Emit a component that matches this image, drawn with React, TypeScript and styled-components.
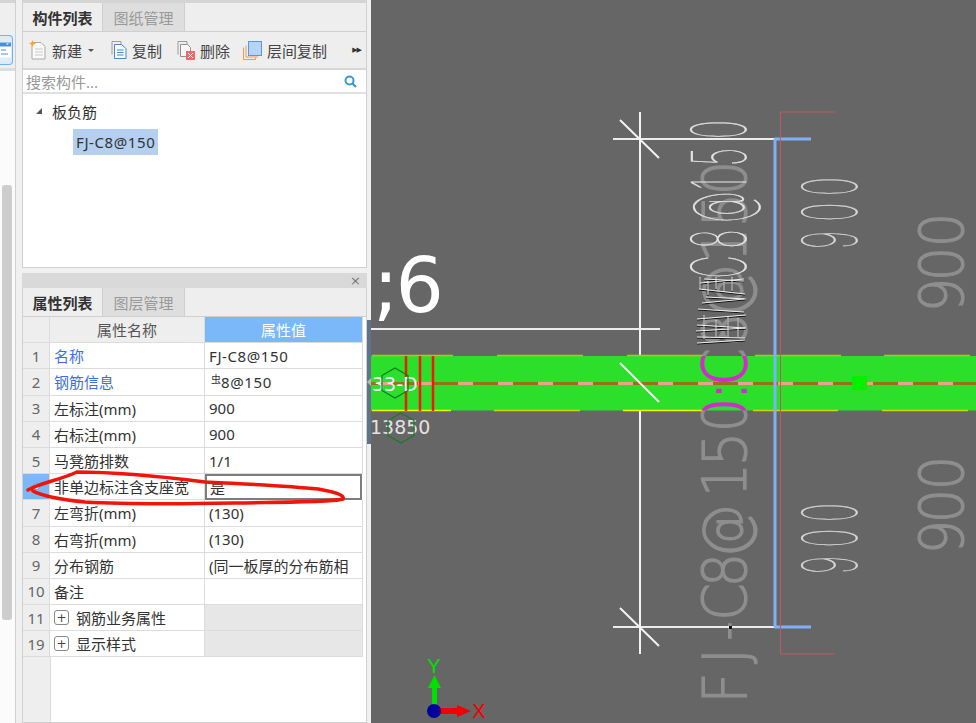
import { Fragment } from "react";
import styled, { createGlobalStyle } from "styled-components";

const GlobalStyle = createGlobalStyle`
    html, body {
        margin: 0;
        padding: 0;
        background: #f0f0f0;
    }
    body {
        font-family: "Noto Sans", "Noto Sans CJK SC", sans-serif;
        font-size: 15px;
        color: #333;
    }
`;

const Shell = styled.div`
    display: flex;
    width: 976px;
    height: 723px;
    overflow: hidden;
    background: #f0f0f0;
`;

const Rail = styled.div`
    flex-shrink: 0;
    width: 15px;
    display: flex;
    flex-direction: column;
    border-right: 1px solid #cfcfcf;
    background: #fbfbfb;
`;

const RailTools = styled.div`
    height: 71px;
    padding-top: 32px;
    box-sizing: border-box;
    background: #efefef;
    border-top: 3px solid #d4d4d4;
    border-bottom: 3px solid #dddddd;
`;

const RailButton = styled.div`
    width: 13px;
    height: 30px;
    box-sizing: border-box;
    border: 1px solid #6cb2f5;
    border-left: 0;
    border-radius: 0 4px 4px 0;
    background: #dcecfb;
    display: flex;
    align-items: center;
`;

const RailScrollTrack = styled.div`
    flex: 1;
    padding: 114px 3px 103px 2px;
    display: flex;
`;

const RailScrollThumb = styled.div`
    flex: 1;
    background: #cdcdcd;
    border-radius: 3px;
`;

const Panels = styled.div`
    flex-shrink: 0;
    width: 345px;
    margin-left: 6px;
    display: flex;
    flex-direction: column;
    position: relative;
`;

const TopStrip = styled.div`
    height: 3px;
    background: #d4d4d4;
`;

const Panel = styled.div<{ $grow?: boolean }>`
    display: flex;
    flex-direction: column;
    border: 1px solid #d0d0d0;
    border-top: 0;
    box-sizing: border-box;
    ${(p) => (p.$grow ? "flex: 1; min-height: 0;" : "height: 265px;")}
`;

const TitleBar = styled.div`
    margin-top: 5px;
    height: 15px;
    flex-shrink: 0;
    background: #d9d9d9;
    display: flex;
    align-items: center;
    justify-content: flex-end;
    padding-right: 6px;
    color: #777;
    font-size: 13px;
    font-family: "DejaVu Sans", sans-serif;
`;

const TabRow = styled.div`
    height: 29px;
    flex-shrink: 0;
    display: flex;
    background: #eeeeee;
    border-bottom: 1px solid #cfcfcf;
    box-sizing: border-box;
`;

const Tab = styled.div<{ $active?: boolean }>`
    width: ${(p) => (p.$active ? "80px" : "82px")};
    display: flex;
    align-items: center;
    justify-content: center;
    font-weight: ${(p) => (p.$active ? 700 : 400)};
    color: ${(p) => (p.$active ? "#333" : "#999")};
    background: ${(p) => (p.$active ? "#eeeeee" : "#dedede")};
    border-right: 1px solid #cfcfcf;
    box-sizing: border-box;
`;

const Toolbar = styled.div`
    height: 38px;
    flex-shrink: 0;
    display: flex;
    align-items: center;
    padding-left: 6px;
    background: #eeeeee;
    border-bottom: 2px solid #d6d6d6;
    box-sizing: border-box;
`;

const ToolButton = styled.div<{ $gap: number }>`
    display: flex;
    align-items: center;
    gap: 5px;
    margin-right: ${(p) => p.$gap}px;
    white-space: nowrap;
    color: #444;
`;

const Caret = styled.span`
    width: 0;
    height: 0;
    margin-left: 1px;
    border-left: 3px solid transparent;
    border-right: 3px solid transparent;
    border-top: 3px solid #555;
`;

const More = styled.span`
    margin-left: auto;
    margin-right: 5px;
    font-size: 7px;
    letter-spacing: -1px;
    color: #333;
    font-family: "DejaVu Sans", sans-serif;
`;

const SearchBar = styled.div`
    height: 24px;
    flex-shrink: 0;
    display: flex;
    align-items: center;
    justify-content: space-between;
    padding: 0 9px 0 3px;
    color: #999;
    background: #fff;
    border-bottom: 2px solid #e0e0e0;
    box-sizing: border-box;
`;

const Tree = styled.div`
    flex: 1;
    background: #fff;
    padding: 6px 0 0 13px;
`;

const TreeRoot = styled.div`
    display: flex;
    align-items: center;
    gap: 10px;
    height: 22px;
    color: #333;
`;

const TreeArrow = styled.span`
    width: 0;
    height: 0;
    border-left: 6px solid transparent;
    border-bottom: 6px solid #555;
`;

const TreeItem = styled.div`
    display: inline-block;
    margin: 7px 0 0 37px;
    padding: 0 3px;
    height: 26px;
    line-height: 26px;
    background: #b4cff0;
    color: #333;
    letter-spacing: 0.6px;
`;

const TableWrap = styled.div`
    flex: 1;
    display: flex;
    flex-direction: column;
    background: #fff;
    padding-right: 3px;
    min-height: 0;
`;

const TableRow = styled.div`
    display: grid;
    grid-template-columns: 27px 155px 1fr;
    height: 26.2px;
    flex-shrink: 0;
`;

const Cell = styled.div<{ $bg?: string; $color?: string; $center?: boolean }>`
    display: flex;
    align-items: center;
    justify-content: ${(p) => (p.$center ? "center" : "flex-start")};
    padding: 0 ${(p) => (p.$center ? 0 : 4)}px;
    box-sizing: border-box;
    white-space: nowrap;
    overflow: hidden;
    background: ${(p) => p.$bg ?? "#fff"};
    color: ${(p) => p.$color ?? "#333"};
    border-right: 1px solid #dcdcdc;
    border-bottom: 1px solid #dcdcdc;
`;

const NumberCell = styled(Cell)`
    background: ${(p) => p.$bg ?? "#eeeeee"};
    color: #666;
    padding: 0;
    justify-content: center;
`;

const ActiveValue = styled(Cell)`
    border: 2px solid #7d7d7d;
    padding-left: 3px;
    margin-right: 1px;
`;

const RebarText = styled.span`
    letter-spacing: 0.6px;
`;

const SelectedDot = styled.span`
    width: 5px;
    height: 5px;
    border-radius: 50%;
    background: #fff;
    border: 1px solid #5d95d8;
`;

const GroupName = styled.span`
    margin-left: 7px;
`;

const PlusBox = styled.span`
    width: 15px;
    height: 15px;
    flex-shrink: 0;
    box-sizing: border-box;
    border: 1px solid #888;
    border-radius: 3px;
    display: flex;
    align-items: center;
    justify-content: center;
    font-size: 12px;
    line-height: 1;
    color: #444;
    font-family: "DejaVu Sans", sans-serif;
`;

const SteelMark = styled.span`
    font-size: 10px;
    position: relative;
    top: -3px;
    margin-left: 2px;
`;

const TableFiller = styled.div`
    flex: 1;
    width: 27px;
    background: #eeeeee;
    border-right: 1px solid #dcdcdc;
`;

const Annotation = styled.svg`
    position: absolute;
    left: -22px;
    top: 0;
    pointer-events: none;
`;

const Gutter = styled.div`
    flex-shrink: 0;
    width: 4px;
    padding-top: 320px;
`;

const SplitHandle = styled.div`
    height: 124px;
    background: #5f7488;
    display: flex;
    align-items: center;
    justify-content: center;
`;

const SplitArrow = styled.span`
    width: 0;
    height: 0;
    border-top: 4px solid transparent;
    border-bottom: 4px solid transparent;
    border-right: 4px solid #b9b9b9;
`;

const Canvas = styled.div`
    flex: 1;
    background: #666666;
`;

const Drawing = styled.svg`
    display: block;
`;

type Row = { no: string; name: string; value?: React.ReactNode; link?: boolean };

const rows: Row[] = [
    { no: "1", name: "名称", value: <RebarText>FJ-C8@150</RebarText>, link: true },
    { no: "2", name: "钢筋信息", value: <><SteelMark>虫</SteelMark><RebarText>8@150</RebarText></>, link: true },
    { no: "3", name: "左标注(mm)", value: "900" },
    { no: "4", name: "右标注(mm)", value: "900" },
    { no: "5", name: "马凳筋排数", value: "1/1" },
];

const rowsAfter: Row[] = [
    { no: "7", name: "左弯折(mm)", value: "(130)" },
    { no: "8", name: "右弯折(mm)", value: "(130)" },
    { no: "9", name: "分布钢筋", value: "(同一板厚的分布筋相" },
    { no: "10", name: "备注", value: "" },
];

const PropRow = ({ no, name, value, link }: Row) => (
    <TableRow>
        <NumberCell>{no}</NumberCell>
        <Cell $color={link ? "#3d6fe3" : undefined}>{name}</Cell>
        <Cell>{value}</Cell>
    </TableRow>
);

const GroupRow = ({ no, name }: { no: string; name: string }) => (
    <TableRow>
        <NumberCell>{no}</NumberCell>
        <Cell>
            <PlusBox>+</PlusBox>
            <GroupName>{name}</GroupName>
        </Cell>
        <Cell $bg="#e7e7e7" />
    </TableRow>
);

const NewIcon = () => (
    <svg width="18" height="20" viewBox="0 0 18 20">
        <path d="M3 2.500h9l4 4v12.500H3z" fill="#fafafa" stroke="#a8a8a8" />
        <path d="M6 9h8M6 12h8M6 15h8" stroke="#c8c8c8" />
        <path d="M3.500 0l1 2.500 2.500 1-2.500 1-1 2.500-1-2.500L0 3.500l2.500-1z" fill="#f5a623" />
    </svg>
);

const CopyIcon = () => (
    <svg width="16" height="18" viewBox="0 0 16 18">
        <path d="M1 .5h9v3" fill="none" stroke="#9a9a9a" />
        <path d="M1 .5v13" fill="none" stroke="#9a9a9a" />
        <path d="M3.500 3.500h7l4.500 4v10h-11.500z" fill="#f4f9ff" stroke="#4d86c6" />
        <path d="M6 9h6.500M6 11.500h6.500M6 14h6.500" stroke="#4d86c6" />
    </svg>
);

const DeleteIcon = () => (
    <svg width="18" height="19" viewBox="0 0 18 19">
        <path d="M1 .5h9v3" fill="none" stroke="#9a9a9a" />
        <path d="M1 .5v13" fill="none" stroke="#9a9a9a" />
        <path d="M3.500 3.500h7l3 3v9h-10z" fill="#f7f7f7" stroke="#8f8f8f" />
        <rect x="9" y="10" width="9" height="9" fill="#ef6a6a" />
        <path d="M11 12l5 5M16 12l-5 5" stroke="#fff" />
    </svg>
);

const FloorCopyIcon = () => (
    <svg width="19" height="19" viewBox="0 0 19 19">
        <path d="M.5 6.500v12h12v-2" fill="none" stroke="#f09a50" />
        <path d="M3 4.500v11.500h12" fill="none" stroke="#f09a50" />
        <rect x="5.500" y=".5" width="13" height="14" fill="#b6d4f8" stroke="#5b95dc" />
    </svg>
);

const SearchIcon = () => (
    <svg width="13" height="13" viewBox="0 0 13 13">
        <circle cx="5.500" cy="5.500" r="4" fill="none" stroke="#3d97d3" strokeWidth="2" />
        <path d="M8.500 8.500l3.500 3.500" stroke="#3d97d3" strokeWidth="2.200" />
    </svg>
);

const RailIcon = () => (
    <svg width="12" height="16" viewBox="0 0 12 16">
        <rect x="0" y=".5" width="11" height="15" fill="#fff" />
        <rect x="0" y=".5" width="11" height="4" fill="#4a90d9" />
        <path d="M1 8h5M1 12h7" stroke="#4a90d9" />
        <path d="M6 1.500h3l-1.500 1.500z" fill="#fff" />
    </svg>
);

type Glyph = [string, number];

// rotated CAD label, each glyph placed by its centre on the y axis
const Rotated = ({ items, base, size, sx = 1, color, family = "DejaVu Sans", weight = 400, stroke }: {
    items: Glyph[]; base: number; size: number; sx?: number; color: string; family?: string; weight?: number; stroke?: number;
}) => (
    <>
        {items.map(([ch, y], i) => (
            <text
                key={i}
                transform={`translate(${base},${y}) rotate(-90) scale(${sx},1)`}
                textAnchor="middle"
                fontSize={size}
                fontFamily={`"${family}", sans-serif`}
                fontWeight={weight}
                fill={color}
                stroke={stroke ? color : undefined}
                strokeWidth={stroke}
            >
                {ch}
            </text>
        ))}
    </>
);

const longLabel: Glyph[] = [
    ["F", 688], ["J", 656], ["-", 631], ["C", 602], ["8", 570], ["@", 531], ["1", 480], ["5", 449], ["0", 415],
    [":", 391], ["C", 367], ["8", 330], ["@", 291], ["1", 245], ["5", 210], ["0", 178],
];

const outlineLabel: Glyph[] = [["C", 267], ["8", 239], ["@", 207], ["1", 184], ["5", 157], ["0", 129.5]];

const smallTop: Glyph[] = [["9", 240], ["0", 212], ["0", 186.500]];
const smallBottom: Glyph[] = [["9", 565], ["0", 538], ["0", 512.500]];
const bigTop: Glyph[] = [["9", 295], ["0", 264], ["0", 230]];
const bigBottom: Glyph[] = [["9", 537], ["0", 506], ["0", 473]];

const topDashes = [[372, 453], [497, 583], [627, 703], [755, 841], [884, 970]];
const bottomDashes = [[372, 451], [494, 580], [623, 703], [753, 838], [882, 968]];

const scribble = [
    "M697 343l48 -3M697 337l48 1M696 331l50 -3M697 325l48 3M697 319l49 -4",
    "M698 309l46 3M702 303l42 -4M706 297l40 2M699 289l46 5M700 283l44 -4M704 279l40 2",
    "M700 277v12M708 281v14M716 277v12M724 282v10M732 277v14",
    "M704 315v24M716 320v18M728 316v22M738 318v20",
];

const CadDrawing = () => (
    <Drawing width="605" height="723" viewBox="371 0 605 723">
        <defs>
            <clipPath id="band">
                <rect x="371" y="356" width="605" height="54.500" />
            </clipPath>
        </defs>

        <Rotated items={longLabel} base={746} size={60} sx={0.9} color="#8e8e8e" weight={200} stroke={1.2} />
        <Rotated items={bigTop} base={963} size={60} sx={0.9} color="#8e8e8e" weight={200} stroke={1.2} />
        <Rotated items={bigBottom} base={963} size={60} sx={0.9} color="#8e8e8e" weight={200} stroke={1.2} />

        <path d="M640 112V654" stroke="#f2f2f2" strokeWidth="2" />
        <path d="M613 139H775M613 627H775M371 329H660" stroke="#ececec" strokeWidth="2" />
        <path d="M620 120L659 158M620 608L659 646" stroke="#f2f2f2" strokeWidth="2" />

        <Rotated items={outlineLabel} base={746} size={76} sx={0.42} color="#e4e4e4" family="Inter" weight={100} stroke={0.4} />
        <path d={scribble.join("")} stroke="#111" strokeWidth="1" transform="translate(0,1)" fill="none" />
        <path d={scribble.join("")} stroke="#eeeeee" strokeWidth="1" fill="none" />
        <Rotated items={smallTop} base={857} size={76} sx={0.42} color="#d8d8d8" family="Inter" weight={100} stroke={0.4} />
        <Rotated items={smallBottom} base={857} size={76} sx={0.42} color="#d8d8d8" family="Inter" weight={100} stroke={0.4} />

        <rect x="371" y="356" width="605" height="54.500" fill="#2bdf2b" />
        {topDashes.map(([a, b]) => (
            <path key={a} d={`M${a} 355.500H${b}`} stroke="#b2c80a" strokeWidth="1.500" />
        ))}
        {bottomDashes.map(([a, b]) => (
            <path key={a} d={`M${a} 410.500H${b}`} stroke={a === 623 || a === 372 ? "#f5f500" : "#d4d40a"} strokeWidth="1.500" />
        ))}
        <path d="M371 383.500H976" stroke="#96701c" strokeWidth="3" />
        <path d="M378 383.500H976" stroke="#f59c94" strokeWidth="3" strokeDasharray="15 25" />
        <path d="M406 356V411M420 356V411M433 356V411" stroke="#f21a00" strokeWidth="2.500" />
        <path d="M620 363L659 402" stroke="#f4f4f4" strokeWidth="2" />

        <g clipPath="url(#band)">
            <Rotated items={longLabel} base={746} size={60} sx={0.9} color="#d22ccb" weight={200} stroke={1.6} />
        </g>

        <path d="M775 139V627M774 139H811M774 627H811" stroke="#80b0fb" strokeWidth="3" fill="none" />
        <path d="M835 112H780.500V654H835" stroke="#b85c5c" strokeWidth="1" fill="none" />
        <rect x="852" y="376" width="15" height="14" fill="#00f000" />
        <rect x="729" y="626" width="3" height="3" fill="#111" />

        <text x="372" y="391" fontSize="19" fontFamily={`"DejaVu Sans", sans-serif`} fill="#f4f4f4">33-D</text>
        <text x="370" y="434" fontSize="19" fontFamily={`"DejaVu Sans", sans-serif`} fill="#e2e2e2">13850</text>
        <polygon points="395,368 408,375.500 408,390.500 395,398 382,390.500 382,375.500" fill="none" stroke="#0c7a20" strokeWidth="1.200" />
        <polygon points="401,413 414,420.500 414,435.500 401,443 388,435.500 388,420.500" fill="none" stroke="#187a28" strokeWidth="1.200" />

        <text x="373" y="312" fontSize="76" letterSpacing="-3" fontFamily={`"DejaVu Sans", sans-serif`} fill="#fff">;6</text>

        <rect x="432" y="687" width="5" height="20" fill="#00e000" />
        <polygon points="434.500,675 441,688 428,688" fill="#00e000" />
        <rect x="440" y="708" width="18" height="6" fill="#f00000" />
        <polygon points="471,711 457,705 457,717" fill="#f00000" />
        <circle cx="434" cy="711" r="7" fill="#00009c" />
        <text x="434" y="673" textAnchor="middle" fontSize="20" fontFamily={`"Liberation Sans", sans-serif`} fill="#00e000">Y</text>
        <text x="479" y="718" textAnchor="middle" fontSize="20" fontFamily={`"Liberation Sans", sans-serif`} fill="#f00000">X</text>
    </Drawing>
);

export default function App() {
    return (
        <Shell>
            <GlobalStyle />
            <Rail>
                <RailTools>
                    <RailButton><RailIcon /></RailButton>
                </RailTools>
                <RailScrollTrack><RailScrollThumb /></RailScrollTrack>
            </Rail>
            <Panels>
                <TopStrip />
                <Panel>
                    <TabRow>
                        <Tab $active>构件列表</Tab>
                        <Tab>图纸管理</Tab>
                    </TabRow>
                    <Toolbar>
                        <ToolButton $gap={17}><NewIcon />新建<Caret /></ToolButton>
                        <ToolButton $gap={15}><CopyIcon />复制</ToolButton>
                        <ToolButton $gap={13}><DeleteIcon />删除</ToolButton>
                        <ToolButton $gap={0}><FloorCopyIcon />层间复制</ToolButton>
                        <More>▶▶</More>
                    </Toolbar>
                    <SearchBar>搜索构件...<SearchIcon /></SearchBar>
                    <Tree>
                        <TreeRoot><TreeArrow />板负筋</TreeRoot>
                        <TreeItem>FJ-C8@150</TreeItem>
                    </Tree>
                </Panel>
                <TitleBar>×</TitleBar>
                <Panel $grow>
                    <TabRow>
                        <Tab $active>属性列表</Tab>
                        <Tab>图层管理</Tab>
                    </TabRow>
                    <TableWrap>
                        <TableRow>
                            <NumberCell />
                            <Cell $center $bg="#eeeeee" $color="#555">属性名称</Cell>
                            <Cell $center $bg="#7ab8fa" $color="#fff">属性值</Cell>
                        </TableRow>
                        {rows.map((row) => <PropRow key={row.no} {...row} />)}
                        <TableRow>
                            <NumberCell $bg="#7ab8fa"><SelectedDot /></NumberCell>
                            <Cell>非单边标注含支座宽</Cell>
                            <ActiveValue>是</ActiveValue>
                        </TableRow>
                        {rowsAfter.map((row) => (
                            <Fragment key={row.no}><PropRow {...row} /></Fragment>
                        ))}
                        <GroupRow no="11" name="钢筋业务属性" />
                        <GroupRow no="19" name="显示样式" />
                        <TableFiller />
                    </TableWrap>
                </Panel>
                <Annotation width="370" height="723" viewBox="0 0 370 723">
                    <path
                        d="M28 490C40 483 60 480 77 472C110 472 150 475 205 482C250 484 290 486 318 489C335 492 345 495 343 499C335 502 290 502 235 503C180 504 120 504 85 502C60 500 40 495 33 491"
                        fill="none"
                        stroke="#f0140a"
                        strokeWidth="3.500"
                        strokeLinecap="round"
                    />
                </Annotation>
            </Panels>
            <Gutter>
                <SplitHandle><SplitArrow /></SplitHandle>
            </Gutter>
            <Canvas><CadDrawing /></Canvas>
        </Shell>
    );
}
